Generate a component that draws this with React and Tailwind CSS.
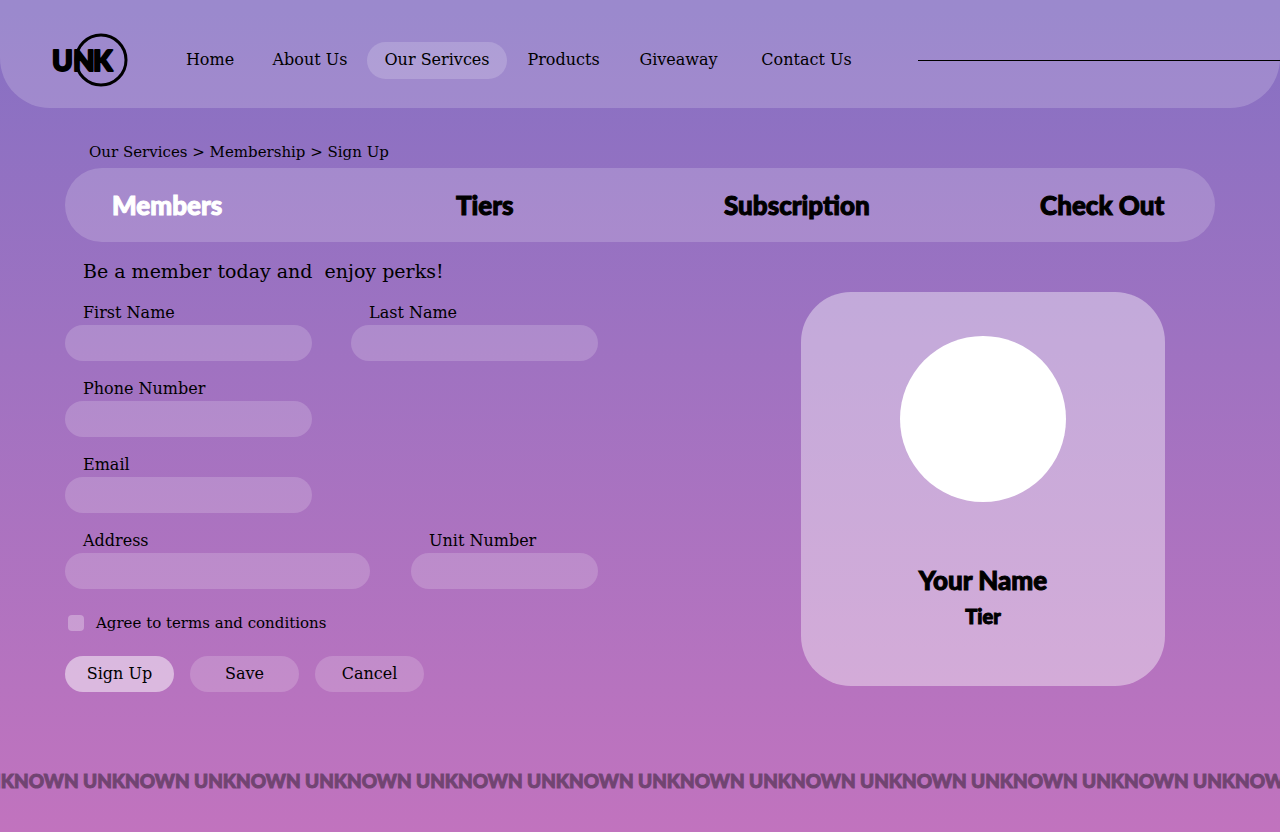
const navLinks = ["Home", "About Us", "Our Serivces", "Products", "Giveaway", "Contact Us"];
const steps = ["Members", "Tiers", "Subscription", "Check Out"];
const display = "font-['Lato',sans-serif] font-black [-webkit-text-stroke:1px_currentColor]";

function Logo() {
  return (
    <svg viewBox="0 0 76 54" className="h-[54px] w-[76px] shrink-0" role="img" aria-label="UNK">
      <circle cx="49" cy="27" r="25" fill="none" stroke="#000" strokeWidth="3" />
      <g
        fontFamily="Lato, sans-serif"
        fontWeight="900"
        fontSize="28"
        stroke="#000"
        strokeWidth="2"
        strokeLinejoin="round"
        strokeLinecap="round"
      >
        <text x="0" y="38">U</text>
        <text x="21" y="38">N</text>
        <text x="41" y="38">K</text>
      </g>
    </svg>
  );
}

function Field({ id, label, type = "text" }) {
  return (
    <div className="flex flex-col">
      <label htmlFor={id} className="pl-[18px] leading-6">
        {label}
      </label>
      <input
        id={id}
        type={type}
        className="h-9 w-full rounded-full bg-white/18 px-[18px] outline-none focus:bg-white/30"
      />
    </div>
  );
}

export default function App() {
  return (
    <div className="flex min-h-screen flex-col overflow-x-hidden bg-linear-to-b from-[#8570c3] to-[#c173be] font-['DejaVu_Serif',serif] text-base text-black">
      <header className="flex h-[108px] items-center rounded-b-[50px] bg-white/18 pt-3 pl-[52px]">
        <a href="#home">
          <Logo />
        </a>
        <nav className="ml-[39px] grid grid-cols-[86px_114px_140px_113px_117px_139px]">
          {navLinks.map((name) => (
            <a
              key={name}
              href="#page"
              className={
                name === "Our Serivces"
                  ? "flex h-[37px] items-center justify-center rounded-full bg-white/18 whitespace-nowrap"
                  : "flex h-[37px] items-center justify-center whitespace-nowrap"
              }
            >
              {name}
            </a>
          ))}
        </nav>
        <hr className="ml-[42px] flex-1 border-black" />
      </header>

      <main className="flex flex-1 flex-col px-[65px] pt-8">
        <p className="pl-6 text-[15px] leading-6">Our Services &gt; Membership &gt; Sign Up</p>
        <nav
          className={`mt-1 grid h-[74px] grid-cols-[344fr_268fr_316fr_125fr] items-center rounded-full bg-white/18 pr-[50px] pl-[47px] text-[26px] ${display}`}
        >
          {steps.map((name) => (
            <a key={name} href="#step" className={name === "Members" ? "text-white" : "whitespace-nowrap"}>
              {name}
            </a>
          ))}
        </nav>

        <div className="flex items-start justify-between gap-10 pr-[50px]">
          <form className="w-full max-w-[533px]" onSubmit={(e) => e.preventDefault()}>
            <h1 className="mt-3 mb-3 pl-[18px] text-[19px] leading-[35px] whitespace-pre">
              {"Be a member today and  enjoy perks!"}
            </h1>
            <div className="grid grid-cols-2 gap-x-[39px] gap-y-4">
              <Field id="first" label="First Name" />
              <Field id="last" label="Last Name" />
              <Field id="phone" label="Phone Number" type="tel" />
              <span />
              <Field id="email" label="Email" type="email" />
            </div>
            <div className="mt-4 grid grid-cols-[305fr_187fr] gap-x-[41px]">
              <Field id="address" label="Address" />
              <Field id="unit" label="Unit Number" />
            </div>
            <div className="mt-[22px] flex items-center gap-3 pl-[3px] leading-6">
              <input
                id="terms"
                type="checkbox"
                className="size-4 appearance-none rounded bg-white/30 checked:bg-white/80"
              />
              <label htmlFor="terms" className="text-[15px]">
                Agree to terms and conditions
              </label>
            </div>
            <div className="mt-[21px] flex gap-4">
              <button type="submit" className="h-9 w-[109px] rounded-full bg-white/50">
                Sign Up
              </button>
              <button type="button" className="h-9 w-[109px] rounded-full bg-white/18">
                Save
              </button>
              <button type="reset" className="h-9 w-[109px] rounded-full bg-white/18">
                Cancel
              </button>
            </div>
          </form>

          <aside
            className={`mt-[50px] flex w-[364px] shrink-0 flex-col items-center rounded-[50px] bg-white/40 pt-11 pb-14 ${display}`}
          >
            <div className="size-[166px] rounded-full bg-white" />
            <p className="mt-[60px] text-[26px] leading-9">Your Name</p>
            <p className="mt-1 text-xl leading-7">Tier</p>
          </aside>
        </div>
      </main>

      <footer className={`-ml-7 flex pt-4 pb-9 text-[19px] leading-[30px] opacity-40 ${display}`}>
        {Array.from({ length: 12 }, (_, i) => (
          <span key={i} className="w-[111px] shrink-0">
            UNKNOWN
          </span>
        ))}
      </footer>
    </div>
  );
}
